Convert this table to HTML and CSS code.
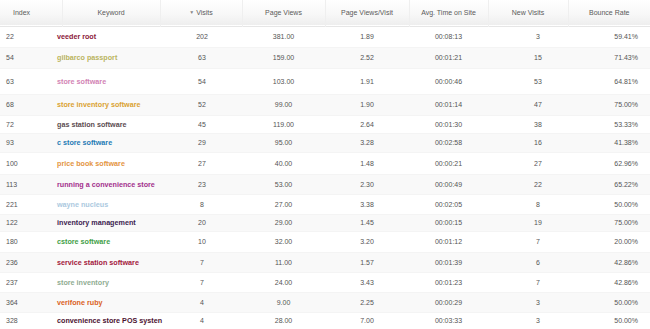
FILE: index.html
```html
<!DOCTYPE html>
<html lang="en">
<head>
  <meta charset="UTF-8">
  <title>Keyword report</title>
  <link rel="stylesheet" href="styles.css">
</head>
<body>
  <table class="report">
    <colgroup>
      <col class="c-index">
      <col class="c-keyword">
      <col class="c-visits">
      <col class="c-pv">
      <col class="c-pvv">
      <col class="c-time">
      <col class="c-new">
      <col class="c-bounce">
    </colgroup>
    <thead>
      <tr>
        <th class="h-index">Index</th>
        <th>Keyword</th>
        <th><span class="sort">&#9660;</span> Visits</th>
        <th>Page Views</th>
        <th>Page Views/Visit</th>
        <th>Avg. Time on Site</th>
        <th>New Visits</th>
        <th>Bounce Rate</th>
      </tr>
    </thead>
    <tbody>
      <tr><td class="idx">22</td><td class="kw k1">veeder root</td><td class="vis">202</td><td>381.00</td><td>1.89</td><td>00:08:13</td><td class="nv">3</td><td class="br">59.41%</td></tr>
      <tr><td class="idx">54</td><td class="kw k2">gilbarco passport</td><td class="vis">63</td><td>159.00</td><td>2.52</td><td>00:01:21</td><td class="nv">15</td><td class="br">71.43%</td></tr>
      <tr><td class="idx">63</td><td class="kw k3">store software</td><td class="vis">54</td><td>103.00</td><td>1.91</td><td>00:00:46</td><td class="nv">53</td><td class="br">64.81%</td></tr>
      <tr><td class="idx">68</td><td class="kw k4">store inventory software</td><td class="vis">52</td><td>99.00</td><td>1.90</td><td>00:01:14</td><td class="nv">47</td><td class="br">75.00%</td></tr>
      <tr><td class="idx">72</td><td class="kw k5">gas station software</td><td class="vis">45</td><td>119.00</td><td>2.64</td><td>00:01:30</td><td class="nv">38</td><td class="br">53.33%</td></tr>
      <tr><td class="idx">93</td><td class="kw k6">c store software</td><td class="vis">29</td><td>95.00</td><td>3.28</td><td>00:02:58</td><td class="nv">16</td><td class="br">41.38%</td></tr>
      <tr><td class="idx">100</td><td class="kw k7">price book software</td><td class="vis">27</td><td>40.00</td><td>1.48</td><td>00:00:21</td><td class="nv">27</td><td class="br">62.96%</td></tr>
      <tr><td class="idx">113</td><td class="kw k8">running a convenience store</td><td class="vis">23</td><td>53.00</td><td>2.30</td><td>00:00:49</td><td class="nv">22</td><td class="br">65.22%</td></tr>
      <tr><td class="idx">221</td><td class="kw k9">wayne nucleus</td><td class="vis">8</td><td>27.00</td><td>3.38</td><td>00:02:05</td><td class="nv">8</td><td class="br">50.00%</td></tr>
      <tr><td class="idx">122</td><td class="kw k10">inventory management</td><td class="vis">20</td><td>29.00</td><td>1.45</td><td>00:00:15</td><td class="nv">19</td><td class="br">75.00%</td></tr>
      <tr><td class="idx">180</td><td class="kw k11">cstore software</td><td class="vis">10</td><td>32.00</td><td>3.20</td><td>00:01:12</td><td class="nv">7</td><td class="br">20.00%</td></tr>
      <tr><td class="idx">236</td><td class="kw k12">service station software</td><td class="vis">7</td><td>11.00</td><td>1.57</td><td>00:01:39</td><td class="nv">6</td><td class="br">42.86%</td></tr>
      <tr><td class="idx">237</td><td class="kw k13">store inventory</td><td class="vis">7</td><td>24.00</td><td>3.43</td><td>00:01:23</td><td class="nv">7</td><td class="br">42.86%</td></tr>
      <tr><td class="idx">364</td><td class="kw k14">verifone ruby</td><td class="vis">4</td><td>9.00</td><td>2.25</td><td>00:00:29</td><td class="nv">3</td><td class="br">50.00%</td></tr>
      <tr><td class="idx">328</td><td class="kw k15">convenience store POS systen</td><td class="vis">4</td><td>28.00</td><td>7.00</td><td>00:03:33</td><td class="nv">3</td><td class="br">50.00%</td></tr>
    </tbody>
  </table>
</body>
</html>
```

FILE: styles.css
```css
body {
  margin: 0;
  padding: 0;
  background: #ffffff;
  font-family: 'Liberation Sans', Arial, sans-serif;
  color: #555555;
}

.report {
  width: 650px;
  border-collapse: collapse;
  table-layout: fixed;
  font-size: 7px;
}

.c-index { width: 62px; }
.c-keyword { width: 98px; }
.c-visits { width: 82px; }
.c-pv { width: 83px; }
.c-pvv { width: 84px; }
.c-time { width: 79px; }
.c-new { width: 80px; }
.c-bounce { width: 82px; }

thead tr {
  height: 26px;
  background: linear-gradient(#ffffff, #f7f7f7 60%, #eeeeee);
  border-bottom: 1px solid #e6e6e6;
}

th {
  font-weight: normal;
  color: #5a5a5a;
  text-align: center;
  padding: 0;
  border-right: 1px solid #efefef;
  white-space: nowrap;
}

th:last-child { border-right: none; }

th.h-index {
  text-align: left;
  padding-left: 13px;
}

.sort {
  font-size: 5px;
  color: #888888;
  vertical-align: 1px;
}

td {
  padding: 0;
  text-align: center;
  white-space: nowrap;
  color: #555555;
}

tbody tr { border-bottom: 1px solid #f4f4f4; }
tbody tr:nth-child(even) { background: #f9f9f9; }

td.idx {
  text-align: left;
  padding-left: 6px;
}

td.vis {
  color: #555555;
  padding-left: 2px;
}

td.kw {
  text-align: left;
  text-indent: -5px;
  font-weight: bold;
  font-size: 7.2px;
}

td.nv { padding-left: 20px; }

td.br {
  text-align: right;
  padding-right: 12px;
}

/* row heights follow the captured report */
tbody tr:nth-child(1) { height: 21px; }
tbody tr:nth-child(2) { height: 21px; }
tbody tr:nth-child(3) { height: 26px; }
tbody tr:nth-child(4) { height: 21px; }
tbody tr:nth-child(5) { height: 18px; }
tbody tr:nth-child(6) { height: 19px; }
tbody tr:nth-child(7) { height: 22px; }
tbody tr:nth-child(8) { height: 20px; }
tbody tr:nth-child(9) { height: 20px; }
tbody tr:nth-child(10) { height: 17px; }
tbody tr:nth-child(11) { height: 21px; }
tbody tr:nth-child(12) { height: 20px; }
tbody tr:nth-child(13) { height: 20px; }
tbody tr:nth-child(14) { height: 20px; }
tbody tr:nth-child(15) { height: 17px; }

.k1 { color: #8c1838; }
.k2 { color: #b9b45e; }
.k3 { color: #d283b4; }
.k4 { color: #d9a232; }
.k5 { color: #5c4c50; font-weight: normal; }
.k6 { color: #1f7bb5; }
.k7 { color: #e3943f; }
.k8 { color: #a3308c; }
.k9 { color: #acc9e0; font-weight: normal; }
.k10 { color: #3c2350; }
.k11 { color: #43a047; }
.k12 { color: #a3183c; }
.k13 { color: #8fac92; font-weight: normal; }
.k14 { color: #d9621e; }
.k15 { color: #4c1230; }
```
